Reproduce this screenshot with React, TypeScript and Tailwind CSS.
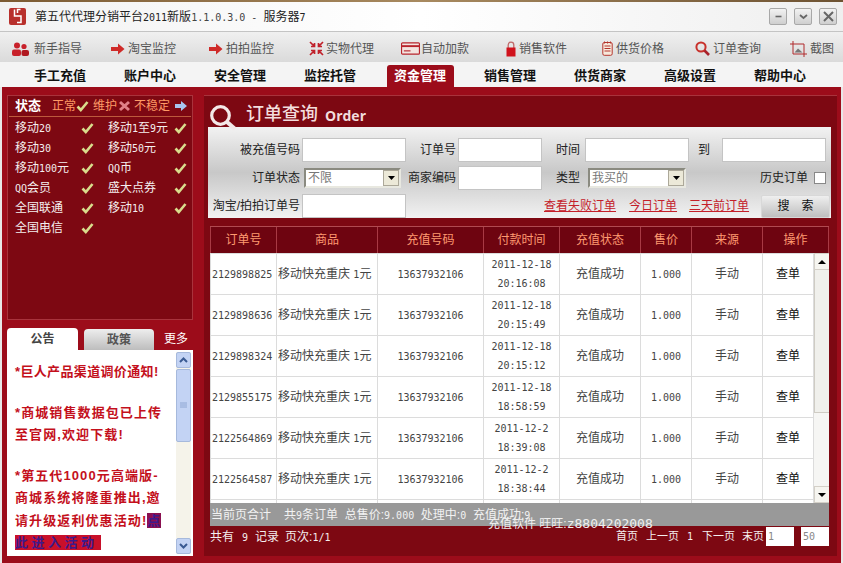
import React from "react";

const M = ({ children }: { children: React.ReactNode }) => (
  <span className="font-['DejaVu_Sans_Mono',monospace] text-[10px]">{children}</span>
);

const Check = () => (
  <svg width="13" height="12" viewBox="0 0 13 12" className="shrink-0">
    <path d="M1.5 6.5 L4.8 10 L11.5 2" fill="none" stroke="#d9dc8c" strokeWidth="2.6" />
  </svg>
);

const IconPeople = () => (
  <svg width="17" height="14" viewBox="0 0 17 14">
    <circle cx="5" cy="3.5" r="3" fill="#c8202a" />
    <circle cx="12" cy="4.5" r="2.6" fill="#c8202a" />
    <rect x="0" y="7.5" width="9" height="6.5" rx="2" fill="#c8202a" />
    <rect x="9.5" y="8" width="7.5" height="6" rx="2" fill="#b01820" />
  </svg>
);
const IconArrow = () => (
  <svg width="14" height="12" viewBox="0 0 14 12">
    <path d="M0 4 H7 V0.5 L13.5 6 L7 11.5 V8 H0 Z" fill="#cf2a28" />
  </svg>
);
const IconShrink = () => (
  <svg width="15" height="15" viewBox="0 0 15 15" fill="none" stroke="#c0202a" strokeWidth="1.7">
    <path d="M1 1 L5.5 5.5 M5.5 2 V5.5 H2 M14 1 L9.5 5.5 M9.5 2 V5.5 H13 M1 14 L5.5 9.5 M5.5 13 V9.5 H2 M14 14 L9.5 9.5 M9.5 13 V9.5 H13" />
  </svg>
);
const IconCard = () => (
  <svg width="19" height="13" viewBox="0 0 20 13" fill="none" stroke="#b8242c" strokeWidth="1.2">
    <rect x="0.6" y="0.6" width="18.8" height="11.8" rx="1" fill="#f3e4e0" />
    <path d="M0.6 4 H19.4" strokeWidth="2" />
    <path d="M3 9 H10" />
  </svg>
);
const IconLock = () => (
  <svg width="10" height="16" viewBox="0 0 10 16">
    <path d="M2.2 7 V4 A2.8 2.8 0 0 1 7.8 4 V7" fill="none" stroke="#c06a6a" strokeWidth="1.3" />
    <rect x="0.5" y="6.5" width="9" height="9" fill="#d0121c" />
  </svg>
);
const IconNote = () => (
  <svg width="11" height="15" viewBox="0 0 11 15" fill="#f7e9dc" stroke="#b4352c">
    <rect x="0.8" y="1.5" width="9.4" height="12.8" rx="1.5" />
    <path d="M2.5 5 H8.5 M2.5 7.5 H8.5 M2.5 10 H8.5 M2.5 0.5 V2.5 M5.5 0.5 V2.5 M8.5 0.5 V2.5" fill="none" />
  </svg>
);
const IconSearch = () => (
  <svg width="15" height="15" viewBox="0 0 15 15" fill="none">
    <circle cx="6" cy="6" r="4.6" stroke="#c8322c" strokeWidth="2" />
    <path d="M9.5 9.5 L14 14" stroke="#a8222a" strokeWidth="2.6" />
  </svg>
);
const IconShot = () => (
  <svg width="17" height="16" viewBox="0 0 17 16" fill="none">
    <path d="M3 0 V13 H17 M0 3 H14 V16" stroke="#b02a2c" />
    <path d="M4.5 11.5 L8 7.5 L12.5 11.5 Z" fill="#777" />
  </svg>
);

const tools: [React.ReactNode, string, string, string][] = [
  [<IconPeople />, "新手指导", "w-[99px]", "gap-[5px]"],
  [<IconArrow />, "淘宝监控", "w-[98px]", "gap-[3px]"],
  [<IconArrow />, "拍拍监控", "w-[100px]", "gap-[3px]"],
  [<IconShrink />, "实物代理", "w-[92px]", "gap-[2px]"],
  [<IconCard />, "自动加款", "w-[105px]", "gap-[1px]"],
  [<IconLock />, "销售软件", "w-[96px]", "gap-[3px]"],
  [<IconNote />, "供货价格", "w-[93px]", "gap-[3px]"],
  [<IconSearch />, "订单查询", "w-[95px]", "gap-[3px]"],
  [<IconShot />, "截图", "w-[50px]", "gap-[3px]"],
];

const tabs = ["手工充值", "账户中心", "安全管理", "监控托管", "资金管理", "销售管理", "供货商家", "高级设置", "帮助中心"];

const statuses: React.ReactNode[] = [
  <>移动<M>20</M></>,
  <>移动<M>1</M>至<M>9</M>元</>,
  <>移动<M>30</M></>,
  <>移动<M>50</M>元</>,
  <>移动<M>100</M>元</>,
  <><M>QQ</M>币</>,
  <><M>QQ</M>会员</>,
  "盛大点券",
  "全国联通",
  <>移动<M>10</M></>,
  "全国电信",
];

const rows = [
  ["2129898825", "2011-12-18", "20:16:08"],
  ["2129898636", "2011-12-18", "20:15:49"],
  ["2129898324", "2011-12-18", "20:15:12"],
  ["2129855175", "2011-12-18", "18:58:59"],
  ["2122564869", "2011-12-2", "18:39:08"],
  ["2122564587", "2011-12-2", "18:38:44"],
];

const headers = ["订单号", "商品", "充值号码", "付款时间", "充值状态", "售价", "来源", "操作"];
const headW = ["w-[66px]", "w-[101px]", "w-[106px]", "w-[76px]", "w-[81px]", "w-[51px]", "w-[71px]", "w-[67px]"];
const bodyW = ["w-[66px]", "w-[101px]", "w-[106px]", "w-[76px]", "w-[81px]", "w-[51px]", "w-[71px]", "w-[51px]"];

const TextInput = ({ className = "w-full" }: { className?: string }) => (
  <div className={`h-[24px] bg-white border border-[#c4c4c4] ${className}`} />
);

const Select = ({ value, className }: { value: string; className: string }) => (
  <div className={`h-[20px] bg-white border-2 border-t-[#8a8a80] border-l-[#8a8a80] border-r-[#e8e8e0] border-b-[#e8e8e0] flex items-center justify-between self-center ${className}`}>
    <span className="pl-[2px] text-[12px] text-[#777] leading-none">{value}</span>
    <span className="w-[16px] h-[16px] bg-[#ece9d8] border border-[#aca899] flex items-center justify-center">
      <svg width="7" height="4" viewBox="0 0 7 4"><path d="M0 0 H7 L3.5 4 Z" fill="#000" /></svg>
    </span>
  </div>
);

const Label = ({ children, className = "" }: { children: React.ReactNode; className?: string }) => (
  <div className={`flex items-center justify-end pr-[2px] text-[12px] text-[#222] whitespace-nowrap ${className}`}>{children}</div>
);

export default function App() {
  return (
    <div className="relative w-[843px] h-[563px] overflow-hidden flex flex-col bg-[#e8e8e8] font-['Liberation_Sans','Noto_Sans_CJK_SC',sans-serif]">
      <div className="h-[2px] shrink-0 bg-gradient-to-r from-[#7b5a32] via-[#a88a60] to-[#6d5232]" />
      {/* title bar */}
      <div className="h-[30px] shrink-0 flex items-center justify-between pl-[9px] pr-[6px] bg-gradient-to-r from-[#f2f2f2] via-white to-[#efefef] border-b border-[#c4c4c4]">
        <div className="flex items-center gap-[9px]">
          <svg width="17" height="17" viewBox="0 0 17 17">
            <rect width="17" height="17" rx="2" fill="#b8302c" />
            <path d="M5.5 1.5 V8 H12 V14.5 H8 M11.5 1.5 H8.5 V5" fill="none" stroke="#fff" strokeWidth="1.5" />
          </svg>
          <span className="text-[12px] text-[#222] whitespace-pre">
            第五代代理分销平台<M>2011</M>新版<span className="font-['DejaVu_Sans_Mono',monospace] text-[10px] text-[#444]">1.1.0.3.0 - </span>服务器<M>7</M>
          </span>
        </div>
        <div className="flex gap-[7px]">
          {["min", "down", "close"].map((k) => (
            <div key={k} className="w-[18px] h-[17px] rounded-[2px] border border-[#a8a8a8] bg-gradient-to-b from-[#f2f2f2] to-[#cfcfcf] flex items-center justify-center">
              <svg width="11" height="11" viewBox="0 0 11 11" fill="none" stroke="#666">
                {k === "min" && <path d="M2.5 5.5 H8.5" strokeWidth="1.6" />}
                {k === "down" && <path d="M2 4 L5.5 7 L9 4" strokeWidth="1.8" />}
                {k === "close" && <path d="M1 1 L10 10 M10 1 L1 10" strokeWidth="2" />}
              </svg>
            </div>
          ))}
        </div>
      </div>
      {/* toolbar */}
      <div className="h-[30px] shrink-0 flex items-center pl-[12px] pt-[3px] bg-gradient-to-b from-[#f0f0f0] to-[#dadada]">
        {tools.map(([icon, label, w, gap]) => (
          <div key={label} className={`flex items-center shrink-0 text-[12px] text-[#555] whitespace-nowrap ${w} ${gap}`}>
            {icon}
            <span>{label}</span>
          </div>
        ))}
      </div>
      {/* tabs */}
      <div className="h-[25px] shrink-0 flex items-end pl-[15px] bg-[#f4f4f4]">
        {tabs.map((t) => (
          <div key={t} className="w-[90px] shrink-0 flex justify-center">
            <div className={t === "资金管理" ? "w-[67px] h-[22px] flex items-center justify-center rounded-t-[3px] bg-[#9c0c1a] text-white text-[13px] font-bold" : "h-[22px] flex items-center text-[13px] font-bold text-[#111]"}>
              {t}
            </div>
          </div>
        ))}
      </div>
      {/* body */}
      <div className="flex-1 min-h-0 mx-[2px] flex gap-[11px] pl-[5px] pr-[4px] pt-[8px] pb-[7px] bg-[#9c0c1a]">
        {/* left column */}
        <div className="w-[186px] shrink-0 flex flex-col">
          <div className="h-[225px] shrink-0 bg-[#7d0812] border border-[#a8333c]">
            <div className="h-[21px] mx-[1px] flex items-center pl-[6px] border-b border-[#bd5a3c] text-[12px] text-[#ff9a66] whitespace-nowrap">
              <span className="w-[37px] text-white font-bold text-[13px]">状态</span>
              <span>正常</span>
              <Check />
              <span className="ml-[4px]">维护</span>
              <svg width="13" height="12" viewBox="0 0 13 12" className="mx-[1px]"><path d="M2 2 L11 10 M11 2 L2 10" stroke="#e08088" strokeWidth="3" /></svg>
              <span className="ml-[2px]">不稳定</span>
              <svg width="12" height="10" viewBox="0 0 12 10" className="ml-[5px]"><path d="M0 3 H6 V0 L12 5 L6 10 V7 H0 Z" fill="#a8c4ee" /></svg>
            </div>
            <div className="grid grid-cols-[79px_79px] gap-x-[14px] pl-[7px] pt-[1px]">
              {statuses.map((s, i) => (
                <div key={i} className="h-[20px] flex items-center justify-between text-[12px] text-[#f4eeee] whitespace-nowrap">
                  <span>{s}</span>
                  <Check />
                </div>
              ))}
            </div>
          </div>
          <div className="h-[22px] shrink-0 mt-[8px] flex items-end text-[12px] font-bold">
            <div className="w-[71px] h-[22px] rounded-t-[4px] bg-white text-[#444] flex items-center justify-center">公告</div>
            <div className="w-[70px] h-[21px] ml-[6px] rounded-t-[4px] bg-gradient-to-b from-[#eee] to-[#bdbdbd] text-[#555] flex items-center justify-center">政策</div>
            <div className="ml-[10px] h-[22px] flex items-center font-normal text-white">更多</div>
          </div>
          <div className="flex-1 min-h-0 flex bg-white pl-[8px] pr-[2px] pt-[2px] pb-[2px] overflow-hidden">
            <div className="flex-1 min-w-0 pt-[9px] text-[13px] font-bold leading-[22.5px] text-[#c4101c] whitespace-nowrap">
              <p className="tracking-[0.35px]">*巨人产品渠道调价通知!</p>
              <p className="mt-[18px] tracking-[1.1px]">*商城销售数据包已上传<br />至官网,欢迎下载!</p>
              <p className="mt-[18px] tracking-[1.1px]">
                *第五代1000元高端版-<br />
                商城系统将隆重推出,邀<br />
                请升级返利优惠活动!<span className="bg-[#8a1050] text-[#3c1a8c]">点</span><br />
                <span className="bg-[#c8102a] text-[#3c1a8c] tracking-[3.5px] pr-[3px]">此进入活动</span>
              </p>
            </div>
            <div className="w-[15px] shrink-0 flex flex-col bg-[#f5f3ea]">
              <div className="h-[16px] shrink-0 rounded-[2px] bg-[#c3d3f4] border border-[#a6b9dc] flex items-center justify-center">
                <svg width="9" height="6" viewBox="0 0 9 6" fill="none"><path d="M1 5 L4.5 1.5 L8 5" stroke="#3a5a92" strokeWidth="2" /></svg>
              </div>
              <div className="h-[73px] shrink-0 mt-[1px] rounded-[2px] bg-[#c3d3f4] border border-[#a6b9dc] flex items-center justify-center">
                <svg width="7" height="7" viewBox="0 0 7 7"><path d="M0 1 H7 M0 3 H7 M0 5 H7" stroke="#8ea6d2" /></svg>
              </div>
              <div className="flex-1" />
              <div className="h-[16px] shrink-0 rounded-[2px] bg-[#c3d3f4] border border-[#a6b9dc] flex items-center justify-center">
                <svg width="9" height="6" viewBox="0 0 9 6" fill="none"><path d="M1 1 L4.5 4.5 L8 1" stroke="#3a5a92" strokeWidth="2" /></svg>
              </div>
            </div>
          </div>
        </div>
        {/* right column */}
        <div className="w-[633px] shrink-0 flex flex-col bg-[#7d0812] border-t border-[#a8333c]">
          <div className="relative h-[31px] shrink-0 flex items-center pl-[42px] pt-[5px] gap-[7px]">
            <span className="text-[18px] leading-none font-medium text-[#f2dcdc] whitespace-nowrap">订单查询</span>
            <span className="text-[14px] font-bold text-[#f2dcdc] font-['Open_Sans',sans-serif] mt-[2px]">Order</span>
            <svg width="28" height="28" viewBox="0 0 28 28" fill="none" className="absolute left-[5px] top-[8px]">
              <circle cx="11.5" cy="11.5" r="8.8" stroke="#f4e8e8" strokeWidth="3.2" />
              <path d="M18 18 L26 25" stroke="#f4e8e8" strokeWidth="4.2" />
            </svg>
          </div>
          {/* search form */}
          <div className="ml-[4px] w-[623px] h-[91px] shrink-0 pt-[11px] bg-gradient-to-b from-[#f2f2f2] via-[#c8c8c8] to-[#f2f2f2] grid grid-cols-[94px_104px_52px_84px_43px_104px_33px_104px] grid-rows-[24px_24px_24px] gap-y-[4px]">
            <Label>被充值号码</Label>
            <TextInput />
            <Label>订单号</Label>
            <TextInput />
            <Label className="pr-[5px]">时间</Label>
            <TextInput />
            <Label className="justify-start pl-[9px]">到</Label>
            <TextInput />

            <Label>订单状态</Label>
            <Select value="不限" className="w-[97px] ml-[2px]" />
            <Label>商家编码</Label>
            <TextInput />
            <Label className="pr-[5px]">类型</Label>
            <Select value="我买的" className="w-[98px] ml-[3px]" />
            <div className="col-span-2 flex items-center justify-end gap-[6px] text-[12px] text-[#222]">
              <span>历史订单</span>
              <span className="w-[12px] h-[12px] bg-white border border-[#888]" />
            </div>

            <Label>淘宝/拍拍订单号</Label>
            <TextInput />
            <div className="col-span-2" />
            <div className="col-span-4 flex items-center pl-[2px] text-[12px] text-[#c4202a] whitespace-nowrap">
              <span className="underline">查看失败订单</span>
              <span className="underline ml-[13px]">今日订单</span>
              <span className="underline ml-[12px]">三天前订单</span>
              <div className="ml-[12px] w-[69px] h-[23px] shrink-0 flex items-center justify-center gap-[12px] rounded-[2px] border border-[#d8d8d8] bg-gradient-to-b from-[#efefef] to-[#bfbfbf] text-[#111]">
                <span>搜</span>
                <span>索</span>
              </div>
            </div>
          </div>
          {/* table */}
          <div className="ml-[6px] mt-[8px] w-[619px] shrink-0">
            <div className="h-[27px] flex bg-[#6e0410] border-t border-[#b04a50]">
              {headers.map((h, i) => (
                <div key={h} className={`${headW[i]} shrink-0 flex items-center justify-center text-[12px] text-[#ff9a70] border-l border-[#a83a44] last:border-r`}>
                  {h}
                </div>
              ))}
            </div>
            <div className="h-[250px] flex bg-white overflow-hidden">
              <table className="w-[603px] table-fixed border-collapse text-[12px] text-[#444]">
                <tbody>
                  {[...rows, ["", "", ""]].map((r, i) => (
                    <tr key={i} className="h-[41px]">
                      <td className={`${bodyW[0]} pl-[1px] border border-[#dcdcdc] whitespace-nowrap`}><M>{r[0]}</M></td>
                      <td className={`${bodyW[1]} pl-[1px] border border-[#dcdcdc] whitespace-nowrap`}>{r[0] && <>移动快充重庆 <M>1</M>元</>}</td>
                      <td className={`${bodyW[2]} text-center border border-[#dcdcdc]`}>{r[0] && <M>13637932106</M>}</td>
                      <td className={`${bodyW[3]} text-center border border-[#dcdcdc] leading-[19px]`}><M>{r[1]}</M><br /><M>{r[2]}</M></td>
                      <td className={`${bodyW[4]} text-center border border-[#dcdcdc]`}>{r[0] && "充值成功"}</td>
                      <td className={`${bodyW[5]} text-center border border-[#dcdcdc]`}>{r[0] && <M>1.000</M>}</td>
                      <td className={`${bodyW[6]} text-center border border-[#dcdcdc]`}>{r[0] && "手动"}</td>
                      <td className={`${bodyW[7]} text-center border border-[#dcdcdc] text-[#111]`}>{r[0] && "查单"}</td>
                    </tr>
                  ))}
                </tbody>
              </table>
              <div className="w-[16px] shrink-0 flex flex-col bg-[#f6f6f4]">
                <div className="h-[17px] shrink-0 border border-[#d4d0c8] bg-[#f6f5f0] flex items-center justify-center">
                  <svg width="8" height="4" viewBox="0 0 8 4"><path d="M0 4 H8 L4 0 Z" fill="#000" /></svg>
                </div>
                <div className="h-[143px] shrink-0 bg-[#f0f0ec] border-x border-b border-[#cfccc4]" />
                <div className="flex-1" />
                <div className="h-[17px] shrink-0 border border-[#d4d0c8] bg-[#f6f5f0] flex items-center justify-center">
                  <svg width="8" height="4" viewBox="0 0 8 4"><path d="M0 0 H8 L4 4 Z" fill="#000" /></svg>
                </div>
              </div>
            </div>
            <div className="h-[23px] flex items-center gap-[13px] pl-[1px] bg-[#999999] text-[12px] text-[#f2f2f2] whitespace-nowrap">
              <span>当前页合计</span>
              <span>
                共<M>9</M>条订单&nbsp; 总售价:<M>9.000</M>&nbsp; 处理中:<M>0</M>&nbsp; 充值成功:<M>9</M>
              </span>
            </div>
            <div className="h-[30px] flex items-start justify-between text-[12px] text-[#f4eeee] whitespace-nowrap">
              <div className="mt-[2px] flex items-center">
                <span>共有</span>
                <span className="ml-[8px]"><M>9</M></span>
                <span className="ml-[7px]">记录</span>
                <span className="ml-[6px]">页次:<M>1/1</M></span>
              </div>
              <div className="flex items-start text-[11px]">
                <span className="mt-[2px]">首页</span>
                <span className="mt-[2px] ml-[8px]">上一页</span>
                <span className="mt-[2px] ml-[8px]"><M>1</M></span>
                <span className="mt-[2px] ml-[9px]">下一页</span>
                <span className="mt-[2px] ml-[7px]">末页</span>
                <div className="ml-[2px] mt-[1px] w-[28px] h-[19px] bg-white text-[#888] flex items-center pl-[2px]"><M>1</M></div>
                <div className="ml-[7px] mt-[1px] w-[28px] h-[19px] bg-white text-[#888] flex items-center pl-[2px]"><M>50</M></div>
              </div>
            </div>
          </div>
        </div>
      </div>
      {/* overlaid watermark text */}
      <div className="absolute left-[488px] top-[516px] text-[12px] leading-[16px] text-[#eeeeee] whitespace-nowrap">
        充值软件 旺旺:<span className="font-['DejaVu_Sans_Mono',monospace] text-[13px]">z8804202008</span>
      </div>
    </div>
  );
}
